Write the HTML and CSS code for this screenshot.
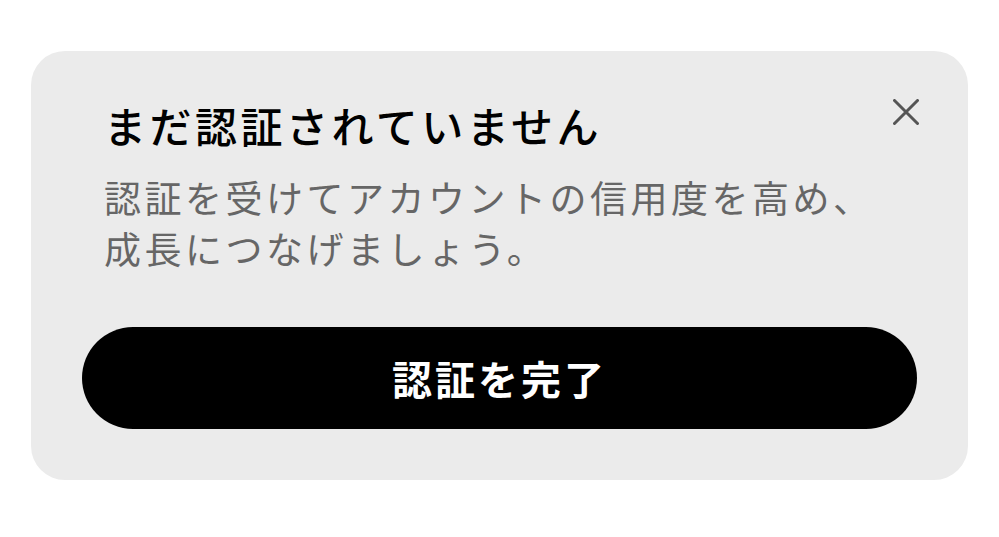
FILE: index.html
```html
<!DOCTYPE html>
<html lang="ja">
<head>
<meta charset="utf-8">
<link rel="stylesheet" href="styles.css">
</head>
<body>
<div class="card">
  <button class="close" aria-label="閉じる">
    <svg viewBox="0 0 26 26" width="26" height="26"><path d="M1.5 1.5 L24.5 24.5 M24.5 1.5 L1.5 24.5" stroke="#555" stroke-width="3" stroke-linecap="round" fill="none"/></svg>
  </button>
  <div class="text">
    <h1 class="title">まだ認証されていません</h1>
    <p class="desc">認証を受けてアカウントの信用度を高め、<br>成長につなげましょう。</p>
  </div>
  <button class="cta">認証を完了</button>
</div>
</body>
</html>
```
FILE: styles.css
```css
html, body {
  margin: 0;
  padding: 0;
  background: #ffffff;
}
body {
  padding: 51px 31px 0 31px;
  font-family: "Noto Sans CJK JP", "Noto Sans", sans-serif;
}
.card {
  position: relative;
  box-sizing: border-box;
  width: 937px;
  height: 429px;
  background: #ebebeb;
  border-radius: 34px;
  padding: 48px 51px 51px 51px;
  display: flex;
  flex-direction: column;
}
.close {
  position: absolute;
  top: 48px;
  right: 49px;
  width: 26px;
  height: 26px;
  padding: 0;
  border: 0;
  background: none;
  display: flex;
}
.text {
  padding-left: 22px;
}
.title {
  margin: 0;
  font-size: 42px;
  line-height: 52px;
  font-weight: 500;
  letter-spacing: 3.5px;
  color: #000;
}
.desc {
  margin: 21px 0 0 0;
  font-size: 37px;
  line-height: 51px;
  font-weight: 400;
  letter-spacing: 3.5px;
  color: #666666;
}
.cta {
  margin-top: auto;
  height: 102px;
  width: 100%;
  border: 0;
  border-radius: 51px;
  background: #000;
  color: #fff;
  font-family: "Noto Sans CJK JP", "Noto Sans", sans-serif;
  font-size: 40px;
  font-weight: 700;
  letter-spacing: 3px;
  padding: 0;
}
```
